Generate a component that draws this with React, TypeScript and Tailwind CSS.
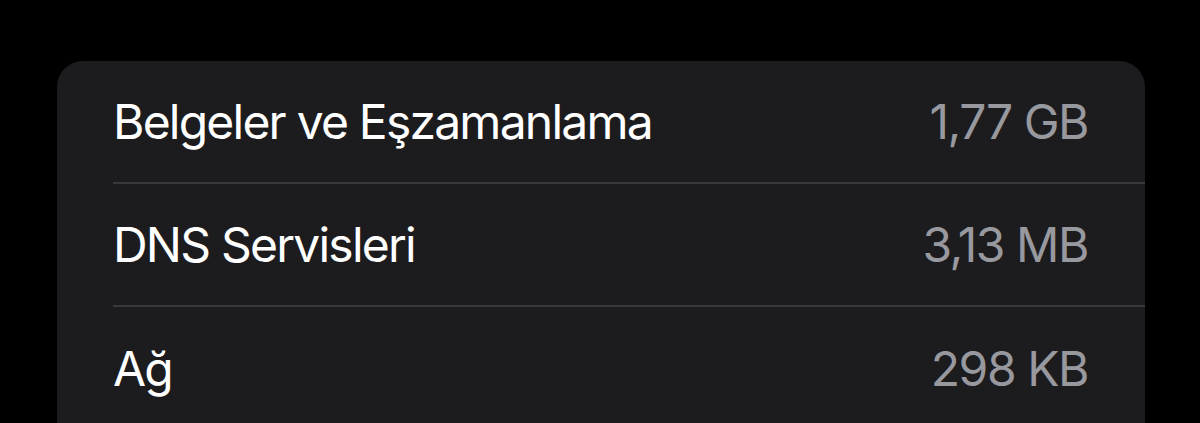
import React from "react";

interface UsageRowProps {
  label: string;
  value: string;
  last?: boolean;
}

const UsageRow = ({ label, value, last }: UsageRowProps) => {
  return (
    <div className="pl-[56px]">
      <div
        className={`flex h-[123px] items-center justify-between pr-[57px] ${
          last ? "" : "border-b-2 border-b-[#38383a]"
        }`}
      >
        <span className="text-[48px] tracking-[-0.037em] text-white">{label}</span>
        <span className="text-[48px] tracking-[-0.03em] text-[#98989f]">{value}</span>
      </div>
    </div>
  );
};

const rows = [
  { label: "Belgeler ve Eşzamanlama", value: "1,77 GB" },
  { label: "DNS Servisleri", value: "3,13 MB" },
  { label: "Ağ", value: "298 KB" },
];

const App = () => {
  return (
    <div
      className="h-[423px] w-[1200px] overflow-hidden bg-black pt-[61px] pl-[57px] pr-[55px]"
      style={{ fontFamily: "Inter, 'Noto Sans', sans-serif" }}
    >
      <section className="rounded-[26px] bg-[#1c1c1e] pb-10">
        {rows.map((row, index) => (
          <UsageRow
            key={index}
            label={row.label}
            value={row.value}
            last={index === rows.length - 1}
          />
        ))}
      </section>
    </div>
  );
};

export default App;
